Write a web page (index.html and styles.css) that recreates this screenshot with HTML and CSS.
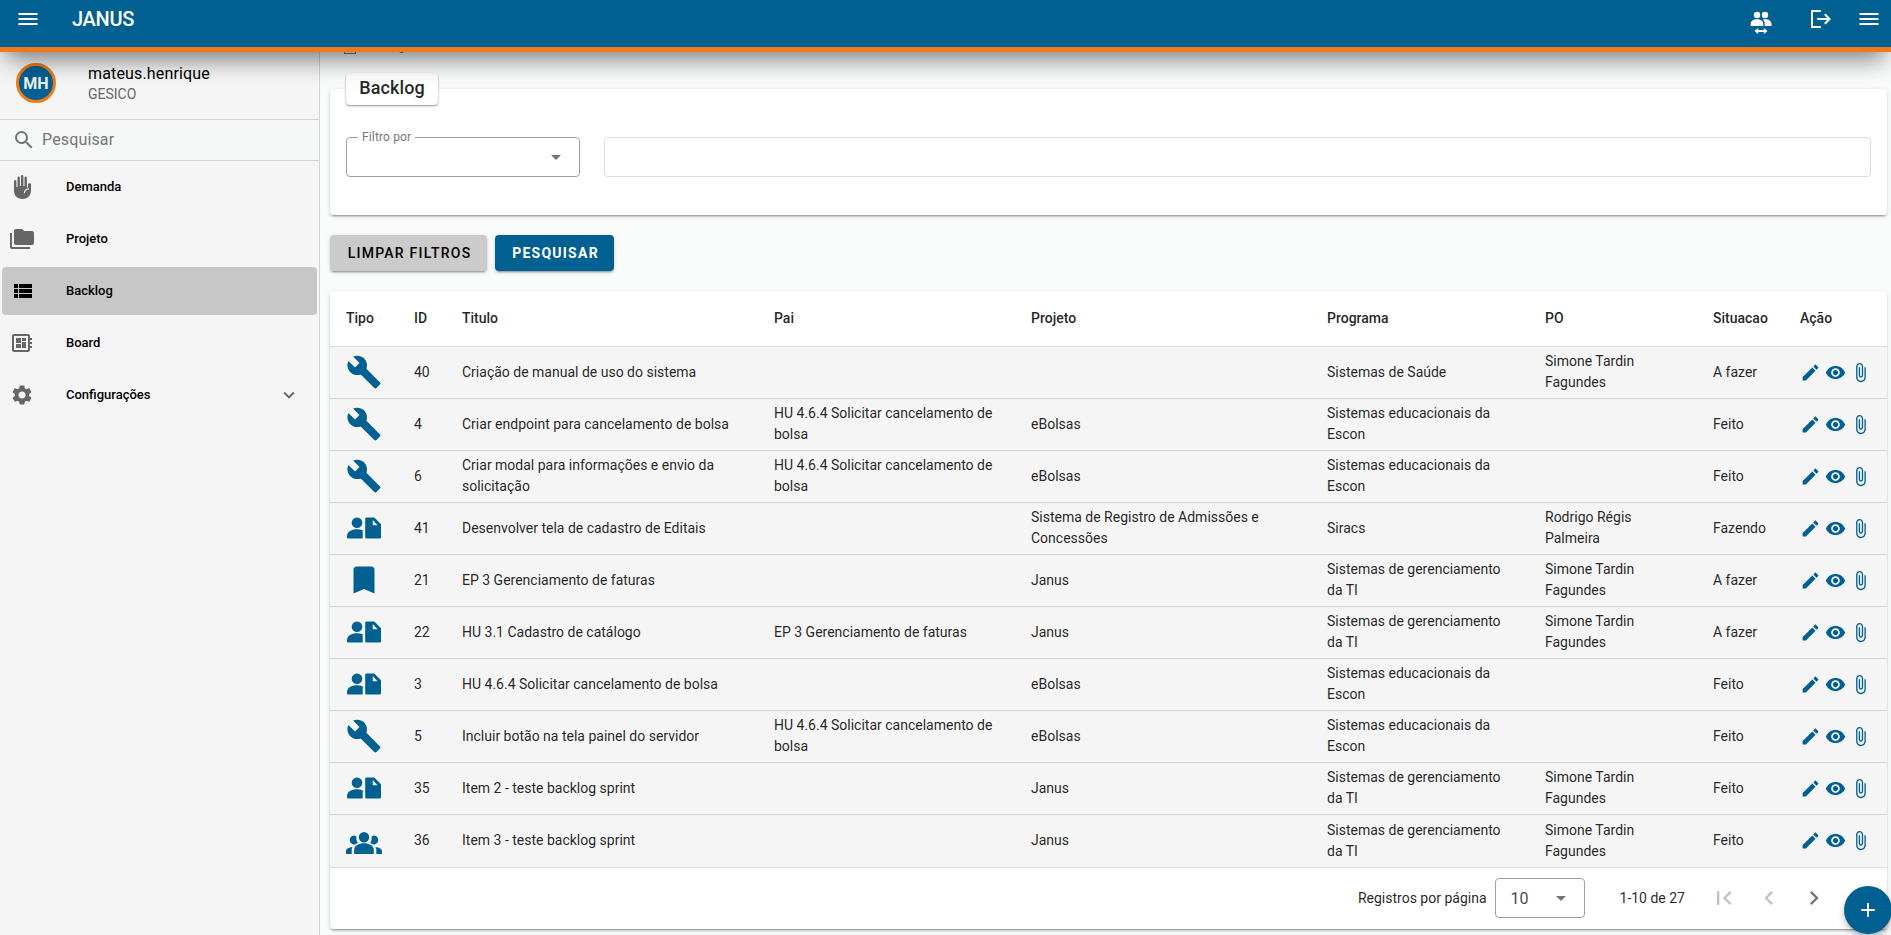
FILE: index.html
```html
<!DOCTYPE html>
<html lang="pt-br">
  <head>
    <meta charset="utf-8">
    <title>JANUS</title>
    <link rel="stylesheet" href="styles.css">
  </head>
  <body>
    <svg class="sprite" width="0" height="0">
      <symbol id="menu" viewBox="0 0 24 24"><path d="M2.500 18h19v-2h-19v2zm0-5h19v-2h-19v2zm0-7v2h19V6h-19z"/></symbol>
      <symbol id="logout" viewBox="0 0 24 24"><path d="M4 3h9v2H5v14h8v2H3.600a1 1 0 0 1-.6-.6V3.600a1 1 0 0 1 .6-.6zM17.500 6.500l5.500 5.500-5.500 5.500-1.400-1.400L19.200 13H9v-2h10.200l-3.100-3.100z"/></symbol>
      <symbol id="users-switch" viewBox="0 0 24 24"><path d="M8 .8a3.200 3.200 0 1 1 0 6.400A3.200 3.200 0 0 1 8 .8zm8 0a3.200 3.200 0 1 1 0 6.400 3.200 3.200 0 0 1 0-6.400zM1.700 15v-2c0-3 2.500-4.700 6.300-4.700s6.300 1.700 6.300 4.700v2zm14 0v-2c0-1.800-.6-3.200-1.900-4.400 4.800-1 8.700.8 8.700 4.400v2zM9.200 17v2h5.600v-2l3.700 3-3.700 3v-2H9.200v2l-3.700-3z"/></symbol>
      <symbol id="search" viewBox="0 0 24 24"><path d="M15.500 14h-.79l-.28-.27A6.471 6.471 0 0 0 16 9.500 6.500 6.500 0 1 0 9.500 16c1.610 0 3.090-.59 4.230-1.570l.27.28v.79l5 4.990L20.490 19l-4.990-5zm-6 0C7.010 14 5 11.990 5 9.500S7.010 5 9.500 5 14 7.010 14 9.500 11.990 14 9.500 14z"/></symbol>
      <symbol id="hand" viewBox="0 0 24 24"><path d="M4 6.200a1.200 1.200 0 0 1 2.400 0V12h1.100V2.700a1.200 1.200 0 0 1 2.400 0V11H11V1.200a1.200 1.200 0 0 1 2.400 0V11h1.100V2.700a1.200 1.200 0 0 1 2.400 0v9.800h1V9.500c0-1.500 3.100-2 3.100-.3V15.500c0 5-3.600 8.500-8.500 8.500S4 20.500 4 15.500z"/><path class="crease" d="M19 13.800c-2.800.2-4.500 1.700-4.700 4.400"/></symbol>
      <symbol id="folders" viewBox="0 0 24 24"><path d="M22 4h-8l-2-2H6c-1.100 0-2 .9-2 2v12c0 1.100.9 2 2 2h16c1.100 0 2-.9 2-2V6c0-1.100-.9-2-2-2zM2 6H0v14c0 1.100.9 2 2 2h18v-2H2V6z"/></symbol>
      <symbol id="list" viewBox="-1 0 24 24"><path d="M3 14h4v-4H3v4zm0 5h4v-4H3v4zM3 9h4V5H3v4zm5 5h13v-4H8v4zm0 5h13v-4H8v4zM8 5v4h13V5H8z"/></symbol>
      <symbol id="board" viewBox="0 0 24 24"><path d="M22 9V7h-2V5c0-1.100-.9-2-2-2H4c-1.100 0-2 .9-2 2v14c0 1.100.9 2 2 2h14c1.100 0 2-.9 2-2v-2h2v-2h-2v-2h2v-2h-2V9h2zm-4 10H4V5h14v14zM6 13h5v4H6v-4zm6-6h4v3h-4V7zM6 7h5v5H6V7zm6 4h4v6h-4v-6z"/></symbol>
      <symbol id="gear" viewBox="0 0 24 24"><path d="M19.140 12.940c.04-.3.060-.61.060-.94 0-.32-.02-.64-.07-.94l2.030-1.580c.18-.14.23-.41.120-.61l-1.920-3.320c-.12-.22-.37-.29-.59-.22l-2.390.96c-.5-.38-1.030-.7-1.620-.94l-.36-2.540c-.04-.24-.24-.41-.48-.41h-3.840c-.24 0-.43.17-.47.41l-.36 2.540c-.59.24-1.130.57-1.620.94l-2.390-.96c-.22-.08-.47 0-.59.22L2.740 8.870c-.12.21-.08.47.12.61l2.030 1.580c-.05.3-.09.63-.09.94s.02.64.07.94l-2.030 1.580c-.18.14-.23.41-.12.61l1.920 3.320c.12.22.37.29.59.22l2.390-.96c.5.38 1.030.7 1.620.94l.36 2.540c.05.24.24.41.48.41h3.840c.24 0 .44-.17.47-.41l.36-2.540c.59-.24 1.130-.56 1.620-.94l2.390.96c.22.08.47 0 .59-.22l1.920-3.320c.12-.22.070-.47-.12-.61l-2.010-1.580zM12 15.600c-1.980 0-3.600-1.620-3.600-3.600s1.620-3.600 3.600-3.600 3.600 1.620 3.600 3.600-1.620 3.600-3.600 3.600z"/></symbol>
      <symbol id="expand" viewBox="0 0 24 24"><path d="M16.590 8.590L12 13.170 7.410 8.590 6 10l6 6 6-6z"/></symbol>
      <symbol id="wrench" viewBox="0 0 24 24"><path d="M22.700 19l-9.100-9.100c.9-2.300.4-5-1.500-6.900-2-2-5-2.400-7.400-1.300L9 6 6 9 1.600 4.700C.4 7.100.9 10.100 2.900 12.100c1.900 1.900 4.600 2.400 6.900 1.500l9.100 9.100c.4.4 1 .4 1.400 0l2.300-2.300c.5-.4.5-1.100.1-1.400z"/></symbol>
      <symbol id="story" viewBox="0 0 34 34"><path d="M10 6.500a5.300 5.300 0 1 1 0 10.600 5.300 5.300 0 0 1 0-10.600zM1 27.500a1 1 0 0 1-1-1v-1.200c0-4.600 4.500-7.100 10-7.100 2 0 4 .3 5.700 1v8.300zM19.500 6.500h7.800l6.700 6.700v13a1.300 1.300 0 0 1-1.300 1.300H19.500a1.300 1.300 0 0 1-1.300-1.300V7.800a1.300 1.300 0 0 1 1.300-1.300zm6.300 2.600v5.100h4.700z" fill-rule="evenodd"/></symbol>
      <symbol id="bookmark" viewBox="0 0 24 24"><path d="M17 3H7c-1.100 0-1.990.9-1.990 2L5 21l7-3 7 3V5c0-1.100-.9-2-2-2z"/></symbol>
      <symbol id="group" viewBox="0 0 36 36"><path d="M18 9a5.200 5.200 0 1 1 0 10.400A5.200 5.200 0 0 1 18 9zM8.200 26.500c0-4 4.800-6.300 9.800-6.300s9.800 2.300 9.800 6.300V31H8.200zM7.500 12.500c1 0 2.100.4 2.900 1a8.500 8.500 0 0 0 1.300 6.300A4.500 4.500 0 1 1 7.500 12.500zm21 0a4.500 4.500 0 1 1-4.200 7.300 8.500 8.500 0 0 0 1.300-6.300c.8-.6 1.800-1 2.900-1zM0 31v-2.500C0 26 2.500 24.500 6.500 24A6 6 0 0 0 5.700 28v3zm36 0v-2.500c0-2.500-2.500-4-6.500-4.500a6 6 0 0 1 .8 4v3z"/></symbol>
      <symbol id="edit" viewBox="0 0 24 24"><path d="M3 17.250V21h3.750L17.810 9.940l-3.750-3.750L3 17.250zM20.710 7.040c.39-.39.39-1.020 0-1.410l-2.340-2.340c-.39-.39-1.020-.39-1.410 0l-1.830 1.830 3.750 3.750 1.830-1.830z"/></symbol>
      <symbol id="eye" viewBox="0 0 24 24"><path d="M12 4.500C7 4.500 2.730 7.610 1 12c1.730 4.390 6 7.500 11 7.500s9.270-3.110 11-7.500c-1.730-4.390-6-7.500-11-7.500zM12 17c-2.760 0-5-2.240-5-5s2.240-5 5-5 5 2.240 5 5-2.240 5-5 5zm0-8c-1.660 0-3 1.340-3 3s1.340 3 3 3 3-1.340 3-3-1.340-3-3-3z"/></symbol>
      <symbol id="clip" viewBox="0 0 24 24"><path d="M16.500 6v11.500c0 2.210-1.790 4-4 4s-4-1.790-4-4V5c0-1.380 1.120-2.500 2.500-2.500s2.500 1.120 2.500 2.500v10.500c0 .55-.45 1-1 1s-1-.45-1-1V6H10v9.500c0 1.380 1.120 2.500 2.500 2.500s2.500-1.120 2.500-2.500V5c0-2.210-1.790-4-4-4S7 2.790 7 5v12.500c0 3.040 2.460 5.500 5.500 5.500s5.500-2.460 5.500-5.500V6h-1.500z"/></symbol>
      <symbol id="first" viewBox="0 0 24 24"><path d="M18.410 16.590L13.820 12l4.590-4.590L17 6l-6 6 6 6zM6 6h2v12H6z"/></symbol>
      <symbol id="prev" viewBox="0 0 24 24"><path d="M15.410 7.410L14 6l-6 6 6 6 1.410-1.410L10.830 12z"/></symbol>
      <symbol id="next" viewBox="0 0 24 24"><path d="M10 6L8.590 7.410 13.170 12l-4.580 4.590L10 18l6-6z"/></symbol>
      <symbol id="add" viewBox="0 0 24 24"><path d="M19 13h-6v6h-2v-6H5v-2h6V5h2v6h6v2z"/></symbol>
    </svg>

    <header class="toolbar">
      <svg class="icon"><use href="#menu"/></svg>
      <span class="brand">JANUS</span>
      <svg class="icon users"><use href="#users-switch"/></svg>
      <svg class="icon logout"><use href="#logout"/></svg>
      <svg class="icon"><use href="#menu"/></svg>
    </header>

    <div class="page">
      <nav class="sidenav">
        <div class="user">
          <div class="avatar">MH</div>
          <div class="user-info">
            <div class="user-name">mateus.henrique</div>
            <div class="user-org">GESICO</div>
          </div>
        </div>
        <div class="search">
          <svg class="icon"><use href="#search"/></svg>
          <span>Pesquisar</span>
        </div>
        <div class="menu">
          <a class="menu-item"><svg class="icon"><use href="#hand"/></svg><span>Demanda</span></a>
          <a class="menu-item"><svg class="icon"><use href="#folders"/></svg><span>Projeto</span></a>
          <a class="menu-item active"><svg class="icon"><use href="#list"/></svg><span>Backlog</span></a>
          <a class="menu-item"><svg class="icon"><use href="#board"/></svg><span>Board</span></a>
          <a class="menu-item"><svg class="icon"><use href="#gear"/></svg><span>Configurações</span><svg class="icon chevron"><use href="#expand"/></svg></a>
        </div>
      </nav>

      <main class="content">
        <div class="breadcrumb"><i class="crumb-icon"></i>Backlog</div>

        <section class="card filter">
          <h1 class="card-title">Backlog</h1>
          <div class="fields">
            <div class="field select"><span class="field-label">Filtro por</span><i class="arrow"></i></div>
            <div class="field disabled"></div>
          </div>
        </section>

        <div class="actions">
          <button class="btn">LIMPAR FILTROS</button>
          <button class="btn primary">PESQUISAR</button>
        </div>

        <section class="card list">
          <table>
            <colgroup>
              <col class="c-tipo"><col class="c-id"><col class="c-titulo"><col class="c-pai"><col class="c-projeto"><col class="c-programa"><col class="c-po"><col class="c-sit"><col>
            </colgroup>
            <thead>
              <tr><th>Tipo</th><th>ID</th><th>Titulo</th><th>Pai</th><th>Projeto</th><th>Programa</th><th>PO</th><th>Situacao</th><th>Ação</th></tr>
            </thead>
            <tbody>
              <tr>
                <td><svg class="type"><use href="#wrench"/></svg></td><td>40</td><td>Criação de manual de uso do sistema</td><td></td><td></td><td>Sistemas de Saúde</td><td>Simone Tardin Fagundes</td><td>A fazer</td>
                <td><div class="acts"><svg><use href="#edit"/></svg><svg><use href="#eye"/></svg><svg><use href="#clip"/></svg></div></td>
              </tr>
              <tr>
                <td><svg class="type"><use href="#wrench"/></svg></td><td>4</td><td>Criar endpoint para cancelamento de bolsa</td><td>HU 4.6.4 Solicitar cancelamento de bolsa</td><td>eBolsas</td><td>Sistemas educacionais da Escon</td><td></td><td>Feito</td>
                <td><div class="acts"><svg><use href="#edit"/></svg><svg><use href="#eye"/></svg><svg><use href="#clip"/></svg></div></td>
              </tr>
              <tr>
                <td><svg class="type"><use href="#wrench"/></svg></td><td>6</td><td>Criar modal para informações e envio da solicitação</td><td>HU 4.6.4 Solicitar cancelamento de bolsa</td><td>eBolsas</td><td>Sistemas educacionais da Escon</td><td></td><td>Feito</td>
                <td><div class="acts"><svg><use href="#edit"/></svg><svg><use href="#eye"/></svg><svg><use href="#clip"/></svg></div></td>
              </tr>
              <tr>
                <td><svg class="type story"><use href="#story"/></svg></td><td>41</td><td>Desenvolver tela de cadastro de Editais</td><td></td><td>Sistema de Registro de Admissões e Concessões</td><td>Siracs</td><td>Rodrigo Régis Palmeira</td><td>Fazendo</td>
                <td><div class="acts"><svg><use href="#edit"/></svg><svg><use href="#eye"/></svg><svg><use href="#clip"/></svg></div></td>
              </tr>
              <tr>
                <td><svg class="type"><use href="#bookmark"/></svg></td><td>21</td><td>EP 3 Gerenciamento de faturas</td><td></td><td>Janus</td><td>Sistemas de gerenciamento da TI</td><td>Simone Tardin Fagundes</td><td>A fazer</td>
                <td><div class="acts"><svg><use href="#edit"/></svg><svg><use href="#eye"/></svg><svg><use href="#clip"/></svg></div></td>
              </tr>
              <tr>
                <td><svg class="type story"><use href="#story"/></svg></td><td>22</td><td>HU 3.1 Cadastro de catálogo</td><td>EP 3 Gerenciamento de faturas</td><td>Janus</td><td>Sistemas de gerenciamento da TI</td><td>Simone Tardin Fagundes</td><td>A fazer</td>
                <td><div class="acts"><svg><use href="#edit"/></svg><svg><use href="#eye"/></svg><svg><use href="#clip"/></svg></div></td>
              </tr>
              <tr>
                <td><svg class="type story"><use href="#story"/></svg></td><td>3</td><td>HU 4.6.4 Solicitar cancelamento de bolsa</td><td></td><td>eBolsas</td><td>Sistemas educacionais da Escon</td><td></td><td>Feito</td>
                <td><div class="acts"><svg><use href="#edit"/></svg><svg><use href="#eye"/></svg><svg><use href="#clip"/></svg></div></td>
              </tr>
              <tr>
                <td><svg class="type"><use href="#wrench"/></svg></td><td>5</td><td>Incluir botão na tela painel do servidor</td><td>HU 4.6.4 Solicitar cancelamento de bolsa</td><td>eBolsas</td><td>Sistemas educacionais da Escon</td><td></td><td>Feito</td>
                <td><div class="acts"><svg><use href="#edit"/></svg><svg><use href="#eye"/></svg><svg><use href="#clip"/></svg></div></td>
              </tr>
              <tr>
                <td><svg class="type story"><use href="#story"/></svg></td><td>35</td><td>Item 2 - teste backlog sprint</td><td></td><td>Janus</td><td>Sistemas de gerenciamento da TI</td><td>Simone Tardin Fagundes</td><td>Feito</td>
                <td><div class="acts"><svg><use href="#edit"/></svg><svg><use href="#eye"/></svg><svg><use href="#clip"/></svg></div></td>
              </tr>
              <tr>
                <td><svg class="type"><use href="#group"/></svg></td><td>36</td><td>Item 3 - teste backlog sprint</td><td></td><td>Janus</td><td>Sistemas de gerenciamento da TI</td><td>Simone Tardin Fagundes</td><td>Feito</td>
                <td><div class="acts"><svg><use href="#edit"/></svg><svg><use href="#eye"/></svg><svg><use href="#clip"/></svg></div></td>
              </tr>
            </tbody>
          </table>
          <div class="paginator">
            <span>Registros por página</span>
            <div class="field page-size"><span>10</span><i class="arrow"></i></div>
            <span class="range">1-10 de 27</span>
            <svg class="page-btn off"><use href="#first"/></svg>
            <svg class="page-btn off"><use href="#prev"/></svg>
            <svg class="page-btn"><use href="#next"/></svg>
          </div>
        </section>
      </main>
    </div>

    <button class="fab"><svg class="icon"><use href="#add"/></svg></button>
  </body>
</html>
```

FILE: styles.css
```css
* {
  box-sizing: border-box;
}
html, body {
  height: 100%;
}
body {
  margin: 0;
  overflow: hidden;
  display: flex;
  flex-direction: column;
  font-family: Roboto, sans-serif;
  font-size: 14px;
  color: rgba(0, 0, 0, 0.87);
  background-color: #fafcfc;
}
.sprite {
  position: absolute;
}
.icon {
  width: 24px;
  height: 24px;
  flex: none;
  fill: currentColor;
}

/* toolbar */
.toolbar {
  position: relative;
  z-index: 2;
  flex: none;
  height: 52px;
  padding: 0 10px 9px 16px;
  display: flex;
  align-items: center;
  color: white;
  background-color: #006092;
  border-bottom: 5px solid #ef7b17;
  box-shadow: 0 12px 26px -6px rgba(0, 0, 0, 0.55);
}
.brand {
  margin-left: 32px;
  font-size: 20px;
  font-weight: 500;
  letter-spacing: -0.3px;
  flex: 1;
}
.users {
  margin-right: 35px;
  margin-top: 8px;
}
.logout {
  margin-right: 25px;
}

.page {
  flex: 1;
  min-height: 0;
  display: flex;
}

/* side menu */
.sidenav {
  width: 320px;
  flex: none;
  background-color: #f5f5f5;
  border-right: 1px solid #d3d3d3;
}
.user {
  height: 68px;
  padding: 0 16px 16px;
  display: flex;
  align-items: flex-end;
  gap: 32px;
  border-bottom: 1px solid #d3d3d3;
}
.avatar {
  width: 40px;
  height: 40px;
  display: flex;
  align-items: center;
  justify-content: center;
  border: 3px solid #ef7b17;
  border-radius: 50%;
  background-color: #006092;
  color: #f0f0f0;
  font-size: 16px;
  font-weight: bold;
}
.user-info {
  margin-bottom: -1px;
}
.user-name {
  font-size: 16px;
  line-height: 20px;
  color: black;
  letter-spacing: 0.15px;
}
.user-org {
  line-height: 20px;
  color: #666;
}
.search {
  height: 41px;
  padding: 0 0 1px 12px;
  display: flex;
  align-items: center;
  gap: 6px;
  font-size: 16px;
  letter-spacing: 0.15px;
  color: #757575;
  background-color: #f6f8f8;
  border-bottom: 1px solid #d3d3d3;
}
.menu {
  padding: 2px;
  display: flex;
  flex-direction: column;
  gap: 4px;
}
.menu-item {
  height: 48px;
  padding: 0 17px 0 8px;
  display: flex;
  align-items: center;
  gap: 32px;
  border-radius: 4px;
  font-size: 13px;
  font-weight: 500;
  color: black;
}
.menu-item span {
  padding-bottom: 2px;
}
.menu-item .icon {
  color: #666;
}
.crease {
  fill: none;
  stroke: #f5f5f5;
  stroke-width: 1.2;
}
.menu-item.active {
  background-color: #c7c7c7;
}
.menu-item.active .icon {
  color: black;
}
.menu-item .chevron {
  width: 22px;
  margin-left: auto;
}

/* content */
.content {
  flex: 1;
  min-width: 0;
  padding: 0 4px 0 10px;
}
.breadcrumb {
  height: 18px;
  margin-top: -15px;
  padding-left: 14px;
  display: flex;
  align-items: center;
  gap: 6px;
  font-size: 12px;
  color: #777;
}
.crumb-icon {
  width: 12px;
  height: 14px;
  margin-top: 1px;
  border: 1px solid #777;
}
.card {
  background-color: white;
  border-radius: 4px;
  box-shadow: 0 3px 1px -2px rgba(0, 0, 0, 0.2), 0 2px 2px 0 rgba(0, 0, 0, 0.14), 0 1px 5px 0 rgba(0, 0, 0, 0.12);
}
.filter {
  height: 126px;
  margin-top: 34px;
  padding: 0 16px;
  display: flow-root;
}
.card-title {
  width: 92px;
  height: 32px;
  margin: -16px 0 32px;
  text-align: center;
  font-size: 18px;
  font-weight: 500;
  line-height: 30px;
  letter-spacing: 0.1px;
  border-radius: 4px;
  background-color: white;
  box-shadow: 0 1px 2px rgba(0, 0, 0, 0.45);
}
.fields {
  display: flex;
  gap: 24px;
}
.field {
  height: 40px;
  display: flex;
  align-items: center;
  justify-content: space-between;
  border: 1px solid #9e9e9e;
  border-radius: 4px;
}
.field.select {
  width: 234px;
  padding-right: 18px;
}
.field.disabled {
  flex: 1;
  border-color: #dcdcdc;
}
.field-label {
  align-self: flex-start;
  margin: -8px 0 0 11px;
  padding: 0 4px;
  font-size: 12px;
  letter-spacing: 0.15px;
  color: #777;
  background-color: white;
}
.arrow {
  border: 5px solid transparent;
  border-top-color: #757575;
  border-bottom: 0;
}
.actions {
  display: flex;
  gap: 8px;
  margin: 20px 0;
}
.btn {
  width: 157px;
  height: 36px;
  padding: 0 0 1px 2px;
  border: 0;
  border-radius: 4px;
  font-family: inherit;
  font-size: 14px;
  font-weight: 500;
  letter-spacing: 1.25px;
  color: black;
  background-color: #cbcbcb;
  box-shadow: 0 3px 1px -2px rgba(0, 0, 0, 0.2), 0 2px 2px 0 rgba(0, 0, 0, 0.14), 0 1px 5px 0 rgba(0, 0, 0, 0.12);
}
.btn.primary {
  width: 119px;
  font-weight: bold;
  color: white;
  background-color: #006092;
}

/* table */
table {
  width: 100%;
  table-layout: fixed;
  border-collapse: separate;
  border-spacing: 0;
}
.c-tipo { width: 76px; }
.c-id { width: 48px; }
.c-titulo { width: 312px; }
.c-pai { width: 257px; }
.c-projeto { width: 296px; }
.c-programa { width: 218px; }
.c-po { width: 168px; }
.c-sit { width: 87px; }
th {
  height: 56px;
  padding: 0 8px 2px;
  text-align: left;
  font-weight: 500;
  border-bottom: 1px solid #dedede;
}
td {
  height: 52px;
  padding: 0 24px 1px 8px;
  line-height: 21px;
  background-color: #f5f5f5;
  border-bottom: 1px solid #d3d3d3;
}
th:first-child, td:first-child {
  padding-left: 16px;
}
td:nth-child(8), td:nth-child(2), td:first-child, td:last-child {
  padding-right: 0;
}
tbody tr:last-child td {
  border-bottom: 0;
}
.type {
  display: block;
  width: 36px;
  height: 36px;
  fill: #006092;
}
.type.story {
  width: 34px;
  height: 34px;
  margin-left: 1px;
}
.acts {
  display: flex;
  gap: 4px;
}
.acts svg {
  width: 21px;
  height: 21px;
  fill: #006092;
}

.paginator {
  height: 62px;
  padding: 0 59px 1px 0;
  display: flex;
  align-items: center;
  justify-content: flex-end;
  border-top: 1px solid #e0e0e0;
}
.page-size {
  width: 90px;
  margin: 0 35px 0 8px;
  padding: 0 18px 0 15px;
  font-size: 16px;
  color: rgba(0, 0, 0, 0.75);
}
.range {
  margin-right: 25px;
}
.page-btn {
  width: 28px;
  height: 28px;
  fill: #757575;
}
.page-btn + .page-btn {
  margin-left: 17px;
}
.page-btn.off {
  fill: #c2c2c2;
}

.fab {
  position: fixed;
  left: 1844px;
  top: 886px;
  width: 48px;
  height: 48px;
  padding: 12px;
  border: 0;
  border-radius: 50%;
  color: white;
  background-color: #006092;
  box-shadow: 0 3px 5px -1px rgba(0, 0, 0, 0.2), 0 6px 10px 0 rgba(0, 0, 0, 0.14);
}
```
